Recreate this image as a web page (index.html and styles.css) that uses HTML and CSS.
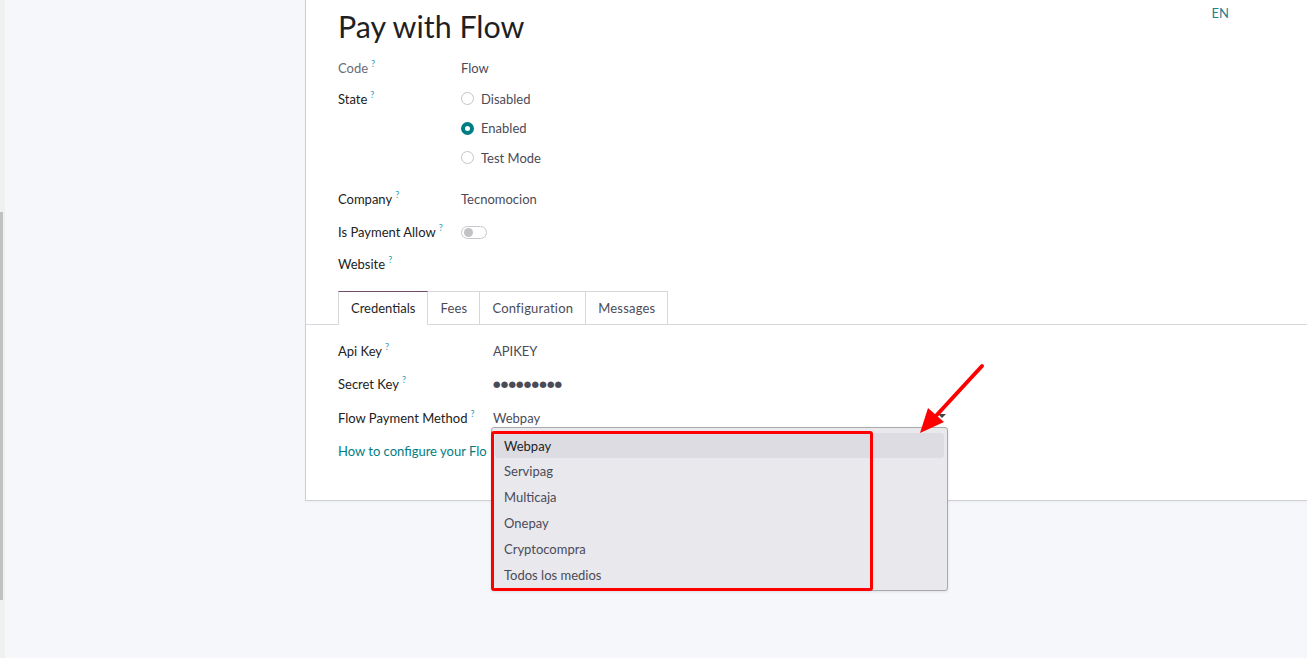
FILE: index.html
```html
<!DOCTYPE html>
<html lang="en">
<head>
<meta charset="utf-8">
<title>Pay with Flow</title>
<link rel="stylesheet" href="styles.css">
</head>
<body>
<div class="page">
  <div class="edge"><div class="edge-thumb"></div></div>
  <div class="content">
    <div class="card">
      <div class="head">
        <h1 class="title">Pay with Flow</h1>
        <span class="lang">EN</span>
      </div>
      <div class="fields">
        <div class="label muted">Code<sup>?</sup></div>
        <div class="value row-h">Flow</div>

        <div class="label state-label">State<sup>?</sup></div>
        <div class="radios">
          <div class="radio"><span class="dot"></span>Disabled</div>
          <div class="radio"><span class="dot on"></span>Enabled</div>
          <div class="radio"><span class="dot"></span>Test Mode</div>
        </div>

        <div class="label gap-top tall">Company<sup>?</sup></div>
        <div class="value gap-top tall">Tecnomocion</div>

        <div class="label">Is Payment Allow<sup>?</sup></div>
        <div class="value"><span class="toggle"><span class="knob"></span></span></div>

        <div class="label">Website<sup>?</sup></div>
        <div class="value"></div>
      </div>

      <div class="tabs">
        <div class="tab active">Credentials</div>
        <div class="tab">Fees</div>
        <div class="tab">Configuration</div>
        <div class="tab">Messages</div>
      </div>

      <div class="creds">
        <div class="label">Api Key<sup>?</sup></div>
        <div class="value">APIKEY</div>

        <div class="label">Secret Key<sup>?</sup></div>
        <div class="value secret">●●●●●●●●●</div>

        <div class="label method">Flow Payment Method<sup>?</sup></div>
        <div class="value method">
          <div class="select">
            <span>Webpay</span>
            <span class="caret"></span>
            <div class="menu">
              <div class="opt hl">Webpay</div>
              <div class="opt">Servipag</div>
              <div class="opt">Multicaja</div>
              <div class="opt">Onepay</div>
              <div class="opt">Cryptocompra</div>
              <div class="opt">Todos los medios</div>
              <div class="redbox"></div>
            </div>
          </div>
        </div>

        <div class="link">How to configure your Flo</div>
      </div>
    </div>
  </div>
</div>
<svg class="arrow" width="80" height="90" viewBox="0 0 80 90">
  <line x1="72" y1="6" x2="24" y2="58" stroke="#ff0000" stroke-width="4" stroke-linecap="round"/>
  <polygon points="10,73 18,48 34,62" fill="#ff0000"/>
</svg>
</body>
</html>
```

FILE: styles.css
```css
* { box-sizing: border-box; }
html, body { margin: 0; padding: 0; }
body {
  background: #f6f7fa;
  font-family: "Lato", "Open Sans", sans-serif;
  font-size: 13px;
  color: #212529;
  width: 1307px;
  height: 658px;
  overflow: hidden;
  position: relative;
}
.page { display: flex; height: 658px; }
.edge {
  width: 5px;
  background: #f0f0f0;
  display: flex;
  flex-direction: column;
  padding-top: 212px;
}
.edge-thumb { width: 3px; height: 388px; background: #c1c1c1; }
.content { flex: 1; padding-left: 300px; }
.card {
  background: #fff;
  border-left: 1px solid #cfd0d6;
  border-bottom: 1px solid #cfd0d6;
  height: 501px;
  box-shadow: 0 1px 2px rgba(0,0,0,0.04);
}
.head {
  display: flex;
  justify-content: space-between;
  align-items: flex-start;
  padding: 0 78px 0 32px;
}
.title {
  margin: 0;
  font-weight: 400;
  font-size: 30.4px;
  line-height: 52px;
  color: #1f1f24;
}
.lang {
  margin-top: 5px;
  color: #1d7f96;
  font-size: 13px;
  line-height: 16px;
}
.fields {
  display: grid;
  grid-template-columns: 123px 1fr;
  padding-left: 32px;
}
.label {
  color: #222;
  height: 32px;
  line-height: 32px;
}
.label.muted { color: #6b6b75; }
.label sup {
  color: #2a9bb0;
  font-size: 9px;
  margin-left: 3px;
  vertical-align: 0;
  position: relative;
  top: -6px;
}
.value { color: #4b4b58; height: 32px; line-height: 32px; }
.tall { height: 33px; line-height: 33px; }
.state-label { height: 30px; line-height: 30px; }
.radios { display: flex; flex-direction: column; }
.radio {
  display: flex;
  align-items: center;
  height: 29.5px;
  color: #4b4b58;
}
.dot {
  width: 13px;
  height: 13px;
  border-radius: 50%;
  border: 1px solid #c4c4c8;
  margin-right: 7px;
  background: #fff;
}
.dot.on {
  border: 4px solid #017e84;
  background: #fff;
}
.gap-top { margin-top: 10px; }
.toggle {
  display: inline-flex;
  align-items: center;
  width: 26px;
  height: 13px;
  border: 1px solid #c8c8cc;
  border-radius: 7px;
  padding-left: 2px;
  vertical-align: middle;
  position: relative;
  top: -1px;
}
.knob { width: 9px; height: 9px; border-radius: 50%; background: #c2c2c6; }
.tabs {
  display: flex;
  margin-top: 11px;
  padding-left: 32px;
  border-bottom: 1px solid #d8d8dc;
  height: 34px;
}
.tab {
  border: 1px solid #d8d8dc;
  border-left: none;
  border-bottom: none;
  padding: 0 12px;
  line-height: 33px;
  color: #4b4b58;
  background: #fff;
  letter-spacing: 0.2px;
}
.tab.active {
  border-left: 1px solid #d8d8dc;
  border-top: 1px solid #714b67;
  color: #1f1f24;
  height: 34px;
  letter-spacing: 0;
}
.creds {
  display: grid;
  grid-template-columns: 155px 1fr;
  padding-left: 32px;
  padding-top: 10px;
}
.creds .label, .creds .value { height: 33px; line-height: 33px; }
.creds .method { height: 35px; line-height: 35px; }
.secret { font-size: 8.6px; letter-spacing: 0.2px; color: #4b4b58; font-family: "DejaVu Sans", sans-serif; }
.select {
  position: relative;
  width: 455px;
  display: flex;
  justify-content: space-between;
  align-items: center;
  height: 35px;
}
.caret {
  width: 0; height: 0;
  border-left: 4px solid transparent;
  border-right: 4px solid transparent;
  border-top: 4px solid #444;
  margin-right: 2px;
  margin-top: -5px;
}
.menu {
  position: absolute;
  left: -2px;
  top: 26px;
  width: 457px;
  height: 164px;
  background: #e8e8ed;
  border: 1px solid #a9a9ae;
  border-radius: 3px;
  padding: 5px 3px 4px;
  color: #4b4b58;
  z-index: 5;
  box-shadow: 0 1px 3px rgba(0,0,0,0.1);
}
.opt { height: 25.9px; line-height: 27px; padding-left: 9px; border-radius: 3px; }
.opt.hl { background: #dcdce2; color: #1f1f24; }
.redbox {
  position: absolute;
  left: -1px;
  top: 3px;
  width: 382px;
  height: 160px;
  border: 3px solid #ff0000;
  border-radius: 3px;
}
.link {
  grid-column: 1 / span 2;
  color: #017e84;
  height: 33px;
  line-height: 31px;
}
.arrow { position: absolute; left: 910px; top: 360px; z-index: 10; }
```
